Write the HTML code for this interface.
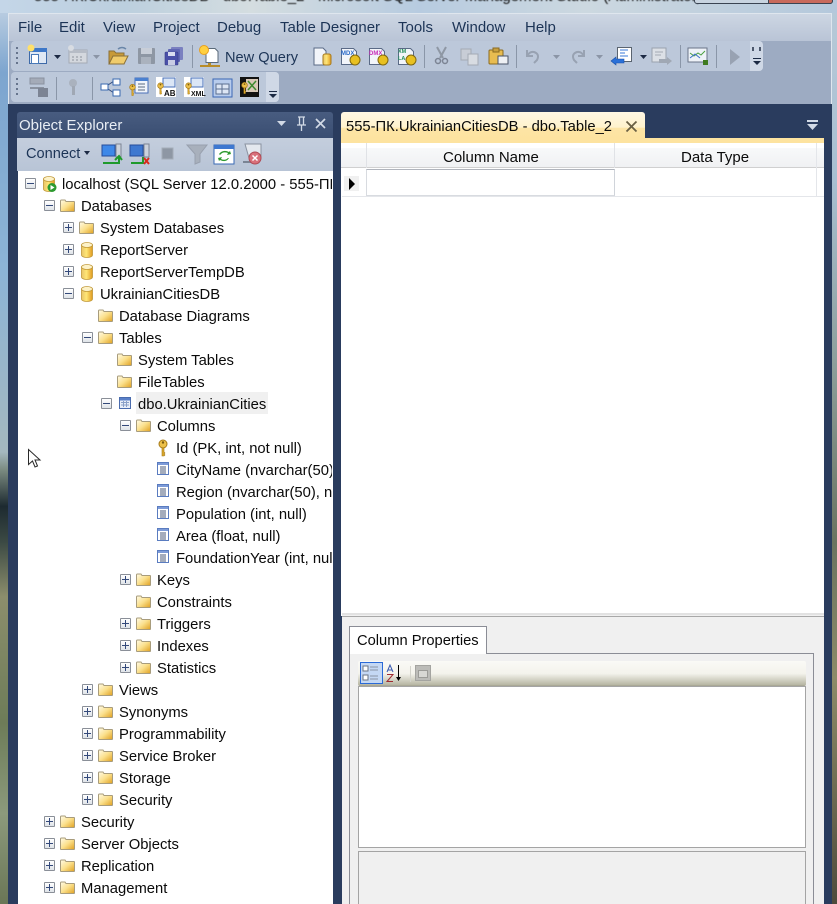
<!DOCTYPE html>
<html><head><meta charset="utf-8">
<style>
html,body{margin:0;padding:0}
body{width:837px;height:904px;overflow:hidden;position:relative;background:#6c7a80;font:15px/22px "Liberation Sans","Noto Sans CJK JP",sans-serif;color:#000}
div,svg,span{position:absolute}
.t{white-space:nowrap;height:22px;line-height:22px;margin-top:1px}
.m{color:#1c3456;top:16px}
.r{white-space:nowrap;height:22px;line-height:22px;color:#0a0a0a;margin-top:1px;font-size:14.8px}
.ex{width:9px;height:9px;border:1px solid #8a8f98;background:linear-gradient(#fff,#dfe3e8);border-radius:1px}
.ex:before{content:"";position:absolute;left:1px;top:4px;width:7px;height:1px;background:#33497a}
.ex.p:after{content:"";position:absolute;left:4px;top:1px;width:1px;height:7px;background:#33497a}
.a{width:0;height:0;border-left:3.5px solid transparent;border-right:3.5px solid transparent;border-top:4px solid #1c2a44}
svg text{font-family:"Liberation Sans",sans-serif;font-weight:bold}
</style></head><body>
<svg width="0" height="0" style="left:0;top:0"><defs>
<linearGradient id="fg" x1="0" y1="0" x2="1" y2="1"><stop offset="0" stop-color="#fffbe8"/><stop offset=".5" stop-color="#fbe08c"/><stop offset="1" stop-color="#e0a020"/></linearGradient>
<linearGradient id="db" x1="0" y1="0" x2="1" y2="0"><stop offset="0" stop-color="#e8c468"/><stop offset=".45" stop-color="#ffe676"/><stop offset="1" stop-color="#e09a20"/></linearGradient>
<symbol id="folder" viewBox="0 0 15 13"><path d="M.5 12V2q0-1 1-1h3.500l1 1.500H14q.5 0 .5.5v9q0 .5-.5.5H1q-.5 0-.5-.5z" fill="url(#fg)" stroke="#a89c7c"/></symbol>
<symbol id="dbi" viewBox="0 0 12 16"><path d="M.5 3v10c0 3.300 11 3.300 11 0V3z" fill="url(#db)" stroke="#c09838" stroke-width=".8"/><ellipse cx="6" cy="3" rx="5.500" ry="2.500" fill="#fdf2c8" stroke="#c09838" stroke-width=".8"/></symbol>
<symbol id="col" viewBox="0 0 12 13"><rect x=".5" y=".5" width="11" height="12" fill="#fff" stroke="#5a7cc0"/><rect x="1" y="1" width="10" height="2" fill="#7d9bd8"/><path d="M3 5h6M3 7h6M3 9h6M3 11h6" stroke="#4a5a78"/></symbol>
<symbol id="key" viewBox="0 0 10 18"><circle cx="5" cy="5" r="4" fill="#ecc04a" stroke="#a67a18"/><circle cx="5" cy="3.500" r="1.200" fill="#7a5a10"/><path d="M4 9v8l2 0 1-1-1-1 1-1-1-1V9z" fill="#dba92c" stroke="#a67a18" stroke-width=".6"/></symbol>
<symbol id="tbl" viewBox="0 0 12 12"><rect x=".5" y=".5" width="11" height="11" fill="#e8eef8" stroke="#4a6cae"/><rect x="1" y="1" width="10" height="2.500" fill="#5a80c8"/><path d="M2 5.500h8M2 8h8M4.500 4v6M7.500 4v6" stroke="#8aa0c8"/></symbol>
</defs></svg>

<!-- desktop -->
<div style="left:0;top:0;width:8px;height:904px;background:linear-gradient(#c4d4e4 0,#7da5cf 8%,#8cb4d6 30%,#a4b8bf 50%,#7a8a80 52%,#1d2a30 56%,#3c4a44 60%,#8c8e6c 66%,#6d7c58 80%,#8c9a7c 90%,#6a7656 100%)"></div>
<div style="left:832px;top:0;width:5px;height:904px;background:linear-gradient(#b8cad8 0,#a8bfd2 20%,#8d9f9c 40%,#6a7360 60%,#8d8b68 75%,#4e4b3c 100%)"></div>
<div style="left:0;top:0;width:837px;height:13px;background:linear-gradient(90deg,#c4d6e8,#bccfde 15%,#d4dde0 30%,#b7cbe0 50%,#ccd8e0 70%,#b4c8dc)"></div>
<div class="t" style="left:34px;top:-15px;color:#111;filter:blur(.4px)">555-ПК.UkrainianCitiesDB - dbo.Table_2 - Microsoft SQL Server Management Studio (Administrator)</div>
<div style="left:694px;top:-4px;width:137px;height:6px;background:#c8d4e0;border:1px solid #3a4452;border-radius:3px"></div>
<div style="left:768px;top:-4px;width:63px;height:6px;background:#c86a5c;border:1px solid #3a4452;border-radius:0 3px 3px 0"></div>

<!-- window -->
<div style="left:8px;top:13px;width:824px;height:891px;background:#9dabc2;box-shadow:0 0 0 1px #dfe6ee inset"></div>
<div style="left:9px;top:14px;width:822px;height:27px;background:linear-gradient(#cdd6e3,#b9c4d6)"></div>
<div class="t m" style="left:18px">File</div>
<div class="t m" style="left:59px">Edit</div>
<div class="t m" style="left:103px">View</div>
<div class="t m" style="left:153px">Project</div>
<div class="t m" style="left:217px">Debug</div>
<div class="t m" style="left:280px">Table Designer</div>
<div class="t m" style="left:398px">Tools</div>
<div class="t m" style="left:452px">Window</div>
<div class="t m" style="left:525px">Help</div>

<!-- toolbars -->
<div style="left:11px;top:41px;width:752px;height:30px;background:#bcc8da;border-radius:4px"></div>
<div style="left:750px;top:41px;width:13px;height:30px;background:#cfd8e6;border-radius:0 4px 4px 0"></div>
<div style="left:11px;top:72px;width:268px;height:30px;background:#bcc8da;border-radius:4px"></div>
<div style="left:266px;top:72px;width:13px;height:30px;background:#cfd8e6;border-radius:0 4px 4px 0"></div>
<svg style="left:0;top:36px" width="837" height="70" viewBox="0 36 837 70">
<g fill="#66748c"><rect x="16" y="47" width="2" height="2"/><rect x="16" y="52" width="2" height="2"/><rect x="16" y="57" width="2" height="2"/><rect x="16" y="62" width="2" height="2"/><rect x="16" y="78" width="2" height="2"/><rect x="16" y="83" width="2" height="2"/><rect x="16" y="88" width="2" height="2"/><rect x="16" y="93" width="2" height="2"/></g>
<!-- new project -->
<rect x="29.500" y="48.500" width="17" height="15" fill="#dfe8f4" stroke="#3e6aa8"/><rect x="29" y="48" width="18" height="4" fill="#3e78c8"/><rect x="31.500" y="54.500" width="7" height="9" fill="#fff" stroke="#4a7ab8"/><circle cx="31" cy="48" r="3.500" fill="#ffe06a"/>
<path d="M54 55h7l-3.500 4z" fill="#1c2a44"/>
<rect x="69" y="50" width="18" height="13" fill="#d4d8de" stroke="#a4aab4"/><rect x="69" y="50" width="18" height="3" fill="#b6bcc6"/><path d="M72 57h12M72 60h12" stroke="#8c929c" stroke-dasharray="2 2"/><circle cx="71" cy="48" r="3" fill="#d8dce2"/>
<path d="M93 55h7l-3.500 4z" fill="#8b95a6"/>
<!-- open -->
<path d="M109 64V51h5l2 2h8v11z" fill="#c89a38" stroke="#8a7038"/><path d="M109 64l4-8h15l-4 8z" fill="#f0cc6c" stroke="#8a7038"/><path d="M118 49q4-3 8 0" stroke="#6a86a8" fill="none" stroke-width="1.500"/>
<!-- save -->
<rect x="138" y="48" width="17" height="16" rx="1" fill="#8e97a4"/><rect x="141" y="48" width="11" height="6" fill="#c8ced8"/><rect x="141" y="57" width="10" height="7" fill="#aab2be"/>
<!-- save all -->
<rect x="171" y="47" width="12" height="13" rx="1" fill="#7a80c0"/><rect x="168" y="49" width="12" height="13" rx="1" fill="#5f66b4"/><rect x="165" y="52" width="13" height="13" rx="1" fill="#4a50a8" stroke="#383c88" stroke-width=".6"/><rect x="168" y="52" width="7" height="4" fill="#d8dcf0"/><rect x="168" y="60" width="7" height="5" fill="#c8cce4"/>
<rect x="192" y="45" width="1" height="23" fill="#8a96a8"/>
<!-- new query -->
<path d="M206 48.500h9l3 3v11h-12z" fill="#fff" stroke="#5a6a7a"/><circle cx="204" cy="50" r="4.500" fill="#ffd040" stroke="#e8a020"/><path d="M200 66h20" stroke="#b88c28" stroke-width="2"/><rect x="208" y="63" width="3" height="4" fill="#b88c28"/>
<!-- doc db -->
<path d="M314 48h9l3 3v14h-12z" fill="#f2f5fa" stroke="#5a6a86"/><rect x="323" y="54" width="8" height="11" rx="2" fill="url(#db)" stroke="#a77a1c"/>
<path d="M341.500 48.500h12l3 3v13h-15z" fill="#f2f5fa" stroke="#5a6a86"/><text x="341" y="55" font-size="6" fill="#2a6ac8">MDX</text><circle cx="355" cy="60" r="5" fill="#e8c020" stroke="#806810"/>
<path d="M369.500 48.500h12l3 3v13h-15z" fill="#f2f5fa" stroke="#5a6a86"/><text x="369" y="55" font-size="6" fill="#c830b8">DMX</text><circle cx="383" cy="60" r="5" fill="#e8c020" stroke="#806810"/>
<path d="M398.500 48.500h12l3 3v13h-15z" fill="#f2f5fa" stroke="#5a6a86"/><text x="398" y="53" font-size="5.500" fill="#2a9060">XM</text><text x="398" y="60" font-size="5.500" fill="#2a9060">LA</text><circle cx="411" cy="60" r="5" fill="#e8c020" stroke="#806810"/>
<rect x="424" y="45" width="1" height="23" fill="#8a96a8"/>
<!-- cut -->
<path d="M437 47l6 11M446 47l-6 11" stroke="#8e97a4" stroke-width="2"/><circle cx="438" cy="61" r="2.500" fill="none" stroke="#7c8494" stroke-width="1.500"/><circle cx="445" cy="61" r="2.500" fill="none" stroke="#7c8494" stroke-width="1.500"/>
<!-- copy -->
<rect x="461" y="49" width="10" height="11" fill="#c8cdd6" stroke="#a4aab4"/><rect x="468" y="54" width="10" height="11" fill="#d8dce2" stroke="#a4aab4"/>
<!-- paste -->
<rect x="489" y="50" width="14" height="14" rx="1" fill="#e8bc50" stroke="#8a6a20"/><rect x="493" y="48" width="6" height="4" fill="#c8a040" stroke="#8a6a20"/><rect x="498" y="56" width="10" height="8" fill="#eef0f4" stroke="#4a5468"/>
<rect x="516" y="45" width="1" height="23" fill="#8a96a8"/>
<path d="M527 50v6h6M527 56q3-5 7-4 6 2 3 8l-3 3" fill="none" stroke="#98a2b2" stroke-width="2"/>
<path d="M553 55h7l-3.500 4z" fill="#8b95a6"/>
<path d="M584 50v6h-6M584 56q-3-5-7-4-6 2-3 8l3 3" fill="none" stroke="#98a2b2" stroke-width="2"/>
<path d="M596 55h7l-3.500 4z" fill="#8b95a6"/>
<!-- results -->
<rect x="617.500" y="47.500" width="14" height="14" fill="#fff" stroke="#5a6470"/><path d="M620 50h8M620 53h5M620 56h8" stroke="#3a7ad8"/><path d="M611 61l5-4v2h8v4h-8v2z" fill="#2a70d8" stroke="#1a50a8" stroke-width=".6"/>
<path d="M640 55h7l-3.500 4z" fill="#1c2a44"/>
<rect x="652" y="48" width="14" height="14" fill="#dce0e6" stroke="#9aa2ae"/><path d="M655 52h8M655 55h6" stroke="#a4aab4"/><path d="M672 61l-5-4v2h-8v4h8v2z" fill="#a0a8b4"/>
<rect x="680" y="45" width="1" height="23" fill="#8a96a8"/>
<!-- chart -->
<rect x="688" y="48" width="19" height="14" fill="#eef2f8" stroke="#6a7488"/><path d="M690 53l4 3 4-3 3 2 4-4" stroke="#4aa040" fill="none"/><path d="M690 58l5-4 5 4" stroke="#3a70c8" fill="none"/><rect x="703" y="60" width="5" height="5" fill="#3e7a20"/>
<rect x="716" y="45" width="1" height="23" fill="#8a96a8"/>
<path d="M730 49l10 8-10 8z" fill="#98a2b2"/>
<path d="M753 47v4M760 47v4" stroke="#222d44" stroke-width="1.500"/><rect x="753" y="58" width="8" height="1" fill="#1c2a44"/><path d="M753 61h8l-4 4z" fill="#1c2a44"/>
<!-- toolbar 2 -->
<rect x="30" y="78" width="14" height="6" fill="#a4abb8" stroke="#8a92a0"/><path d="M30 88h14" stroke="#8a92a0" stroke-width="2"/><rect x="38" y="88" width="10" height="9" fill="#7c8494"/>
<rect x="56" y="77" width="1" height="23" fill="#8a96a8"/>
<circle cx="73" cy="83" r="4" fill="#aab2be"/><rect x="72" y="86" width="3" height="9" fill="#a0a8b4"/>
<rect x="92" y="77" width="1" height="23" fill="#8a96a8"/>
<!-- relationship -->
<path d="M105 87l9-6M105 87l9 6" stroke="#334c7c"/><rect x="101" y="84" width="7" height="6" fill="#fff" stroke="#3a6ab0"/><rect x="113" y="79" width="7" height="6" fill="#fff" stroke="#3a6ab0"/><rect x="113" y="90" width="7" height="6" fill="#fff" stroke="#3a6ab0"/>
<!-- key table -->
<rect x="135" y="78" width="13" height="15" fill="#f0f4fa" stroke="#4a70b8"/><rect x="135" y="78" width="13" height="3" fill="#4a80d0"/><path d="M138 84h7M138 87h7M138 90h7" stroke="#5a6a80"/><use href="#key" x="129" y="83" width="7" height="14"/>
<rect x="156" y="77" width="20" height="20" fill="#fff"/><rect x="163" y="78" width="12" height="9" fill="#dbe6f6" stroke="#4a70b8"/><use href="#key" x="157" y="82" width="7" height="13"/><text x="164" y="96" font-size="8" fill="#111">AB</text>
<rect x="184" y="77" width="20" height="20" fill="#fff"/><rect x="191" y="78" width="12" height="9" fill="#dbe6f6" stroke="#4a70b8"/><use href="#key" x="185" y="82" width="7" height="13"/><text x="191" y="96" font-size="7" fill="#111">XML</text>
<rect x="213" y="79" width="19" height="18" fill="#b8ccec" stroke="#3a66b4"/><rect x="216" y="84" width="13" height="10" fill="#dde6f4" stroke="#5c6f90"/><path d="M216 89h13M222 84v10" stroke="#5c6f90"/>
<rect x="240" y="77" width="19" height="20" fill="#111"/><rect x="246" y="79" width="12" height="13" fill="#d8c8b8"/><path d="M248 90l8-9M248 81l8 9" stroke="#3e8a30" stroke-width="1.500"/><use href="#key" x="241" y="81" width="7" height="14"/>
<rect x="269" y="91" width="8" height="1" fill="#1c2a44"/><path d="M269 94h8l-4 4z" fill="#1c2a44"/>
</svg>
<div class="t" style="left:225px;top:46px;color:#1c3456;font-size:14.6px">New Query</div>

<!-- dark bg -->
<div style="left:8px;top:104px;width:824px;height:800px;background:#2a3c5e"></div>

<!-- Object explorer -->
<div style="left:17px;top:112px;width:316px;height:26px;background:linear-gradient(#485c80,#3a4e72);border-radius:3px 3px 0 0"></div>
<div class="t" style="left:19px;top:114px;color:#e8edf4">Object Explorer</div>
<svg style="left:270px;top:112px" width="63" height="26">
<path d="M7 9h9l-4.500 5z" fill="#d2dae6"/>
<path d="M28 5h7M29.500 5v8M33.500 5v8M27 13h9M31.500 13v6" stroke="#d2dae6" stroke-width="1.300" fill="none"/>
<path d="M46 7l9 9M55 7l-9 9" stroke="#d2dae6" stroke-width="1.700"/>
</svg>
<div style="left:17px;top:138px;width:316px;height:33px;background:linear-gradient(#c4cedd,#b8c4d6)"></div>
<div class="t" style="left:26px;top:142px;color:#1c3456;font-size:14.6px">Connect</div>
<div class="a" style="left:84px;top:151px"></div>
<svg style="left:100px;top:142px" width="170" height="28">
<rect x="2" y="3" width="13" height="11" fill="#3e88e8" stroke="#254c9a"/><rect x="16" y="2" width="5" height="13" fill="#ccd2dc" stroke="#7c8494"/><path d="M3 21h16v-6M15 18l4-4 3 4" stroke="#1f9a2c" stroke-width="2" fill="none"/>
<rect x="30" y="3" width="13" height="11" fill="#3e78d0" stroke="#254c9a"/><rect x="44" y="2" width="5" height="13" fill="#ccd2dc" stroke="#7c8494"/><path d="M31 21h12v-6" stroke="#1f9a2c" stroke-width="2" fill="none"/><path d="M44 16l5 6M49 16l-5 6" stroke="#d82a1c" stroke-width="2"/>
<rect x="62" y="6" width="11" height="11" fill="#8e97a4" stroke="#a4acb8"/>
<path d="M87 3h20l-7 9v8l-5 2V12z" fill="#a8b0bc" stroke="#98a0ae"/>
<rect x="114" y="3" width="20" height="19" fill="#fff" stroke="#3a6ab4"/><rect x="114" y="3" width="20" height="4" fill="#3e78d0"/><path d="M120 13q3-4 8-2l-1 2 4-1-1-3-1 1q-6-3-10 2zM128 16q-3 3-7 1l1-2-4 1 1 3 1-1q6 3 9-2z" fill="#2e9a30"/>
<path d="M145 2h16v14h-12z" fill="#e4e8ee" stroke="#8a92a0"/><path d="M143 20h14" stroke="#7a8494" stroke-width="2"/><circle cx="155" cy="16" r="6" fill="#d8707a" stroke="#b04a54"/><path d="M152.500 13.500l5 5M157.500 13.500l-5 5" stroke="#fff" stroke-width="1.500"/>
</svg>

<div id="tree" style="left:18px;top:171px;width:315px;height:733px;background:#fff;overflow:hidden">
<div style="left:118px;top:221px;width:132px;height:22px;background:#f0f0f0"></div>
</div>

<div style="left:0;top:0;width:332px;height:904px;overflow:hidden">
<!-- level 0 server -->
<div class="ex" style="left:25px;top:178px"></div>
<svg style="left:43px;top:176px" width="15" height="17"><use href="#dbi" width="12" height="16"/><circle cx="9" cy="11.500" r="4.500" fill="#2c9a30"/><path d="M7.500 9l4 2.500-4 2.500z" fill="#fff"/></svg>
<div class="r" style="left:62px;top:173px">localhost (SQL Server 12.0.2000 - 555-ПК\Admin)</div>

<div class="ex" style="left:44px;top:200px"></div><svg style="left:60px;top:199px" width="15" height="13"><use href="#folder"/></svg><div class="r" style="left:81px;top:195px">Databases</div>

<div class="ex p" style="left:63px;top:222px"></div><svg style="left:79px;top:221px" width="15" height="13"><use href="#folder"/></svg><div class="r" style="left:100px;top:217px">System Databases</div>
<div class="ex p" style="left:63px;top:244px"></div><svg style="left:81px;top:242px" width="12" height="16"><use href="#dbi"/></svg><div class="r" style="left:100px;top:239px">ReportServer</div>
<div class="ex p" style="left:63px;top:266px"></div><svg style="left:81px;top:264px" width="12" height="16"><use href="#dbi"/></svg><div class="r" style="left:100px;top:261px">ReportServerTempDB</div>
<div class="ex" style="left:63px;top:288px"></div><svg style="left:81px;top:286px" width="12" height="16"><use href="#dbi"/></svg><div class="r" style="left:100px;top:283px">UkrainianCitiesDB</div>

<svg style="left:98px;top:309px" width="15" height="13"><use href="#folder"/></svg><div class="r" style="left:119px;top:305px">Database Diagrams</div>
<div class="ex" style="left:82px;top:332px"></div><svg style="left:98px;top:331px" width="15" height="13"><use href="#folder"/></svg><div class="r" style="left:119px;top:327px">Tables</div>

<svg style="left:117px;top:353px" width="15" height="13"><use href="#folder"/></svg><div class="r" style="left:138px;top:349px">System Tables</div>
<svg style="left:117px;top:375px" width="15" height="13"><use href="#folder"/></svg><div class="r" style="left:138px;top:371px">FileTables</div>
<div class="ex" style="left:101px;top:398px"></div><svg style="left:119px;top:397px" width="12" height="12"><use href="#tbl"/></svg><div class="r" style="left:138px;top:393px">dbo.UkrainianCities</div>

<div class="ex" style="left:120px;top:420px"></div><svg style="left:136px;top:419px" width="15" height="13"><use href="#folder"/></svg><div class="r" style="left:157px;top:415px">Columns</div>

<svg style="left:158px;top:439px" width="10" height="18"><use href="#key"/></svg><div class="r" style="left:176px;top:437px">Id (PK, int, not null)</div>
<svg style="left:157px;top:462px" width="12" height="13"><use href="#col"/></svg><div class="r" style="left:176px;top:459px">CityName (nvarchar(50), not null)</div>
<svg style="left:157px;top:484px" width="12" height="13"><use href="#col"/></svg><div class="r" style="left:176px;top:481px">Region (nvarchar(50), not null)</div>
<svg style="left:157px;top:506px" width="12" height="13"><use href="#col"/></svg><div class="r" style="left:176px;top:503px">Population (int, null)</div>
<svg style="left:157px;top:528px" width="12" height="13"><use href="#col"/></svg><div class="r" style="left:176px;top:525px">Area (float, null)</div>
<svg style="left:157px;top:550px" width="12" height="13"><use href="#col"/></svg><div class="r" style="left:176px;top:547px">FoundationYear (int, null)</div>

<div class="ex p" style="left:120px;top:574px"></div><svg style="left:136px;top:573px" width="15" height="13"><use href="#folder"/></svg><div class="r" style="left:157px;top:569px">Keys</div>
<svg style="left:136px;top:595px" width="15" height="13"><use href="#folder"/></svg><div class="r" style="left:157px;top:591px">Constraints</div>
<div class="ex p" style="left:120px;top:618px"></div><svg style="left:136px;top:617px" width="15" height="13"><use href="#folder"/></svg><div class="r" style="left:157px;top:613px">Triggers</div>
<div class="ex p" style="left:120px;top:640px"></div><svg style="left:136px;top:639px" width="15" height="13"><use href="#folder"/></svg><div class="r" style="left:157px;top:635px">Indexes</div>
<div class="ex p" style="left:120px;top:662px"></div><svg style="left:136px;top:661px" width="15" height="13"><use href="#folder"/></svg><div class="r" style="left:157px;top:657px">Statistics</div>

<div class="ex p" style="left:82px;top:684px"></div><svg style="left:98px;top:683px" width="15" height="13"><use href="#folder"/></svg><div class="r" style="left:119px;top:679px">Views</div>
<div class="ex p" style="left:82px;top:706px"></div><svg style="left:98px;top:705px" width="15" height="13"><use href="#folder"/></svg><div class="r" style="left:119px;top:701px">Synonyms</div>
<div class="ex p" style="left:82px;top:728px"></div><svg style="left:98px;top:727px" width="15" height="13"><use href="#folder"/></svg><div class="r" style="left:119px;top:723px">Programmability</div>
<div class="ex p" style="left:82px;top:750px"></div><svg style="left:98px;top:749px" width="15" height="13"><use href="#folder"/></svg><div class="r" style="left:119px;top:745px">Service Broker</div>
<div class="ex p" style="left:82px;top:772px"></div><svg style="left:98px;top:771px" width="15" height="13"><use href="#folder"/></svg><div class="r" style="left:119px;top:767px">Storage</div>
<div class="ex p" style="left:82px;top:794px"></div><svg style="left:98px;top:793px" width="15" height="13"><use href="#folder"/></svg><div class="r" style="left:119px;top:789px">Security</div>

<div class="ex p" style="left:44px;top:816px"></div><svg style="left:60px;top:815px" width="15" height="13"><use href="#folder"/></svg><div class="r" style="left:81px;top:811px">Security</div>
<div class="ex p" style="left:44px;top:838px"></div><svg style="left:60px;top:837px" width="15" height="13"><use href="#folder"/></svg><div class="r" style="left:81px;top:833px">Server Objects</div>
<div class="ex p" style="left:44px;top:860px"></div><svg style="left:60px;top:859px" width="15" height="13"><use href="#folder"/></svg><div class="r" style="left:81px;top:855px">Replication</div>
<div class="ex p" style="left:44px;top:882px"></div><svg style="left:60px;top:881px" width="15" height="13"><use href="#folder"/></svg><div class="r" style="left:81px;top:877px">Management</div>

<!-- cursor -->
<svg style="left:27px;top:448px" width="15" height="22"><path d="M1.500 1.500v15l4-3.500 2.500 6 2.500-1-2.500-6h5z" fill="#fff" stroke="#2a2a2a"/></svg>
</div>

<!-- tab -->
<div style="left:341px;top:112px;width:304px;height:26px;background:linear-gradient(#fff8e4 0,#fff2cc 60%,#fde5a6 61%,#fde3a0 100%);border-radius:3px 3px 0 0"></div>
<div class="t" style="left:346px;top:115px;color:#0a0a0a;font-size:14.75px">555-ПК.UkrainianCitiesDB - dbo.Table_2</div>
<svg style="left:625px;top:120px" width="13" height="13"><path d="M1.500 1.500l10 10M11.500 1.500l-10 10" stroke="#6a6044" stroke-width="1.800"/></svg>
<svg style="left:806px;top:119px" width="13" height="12"><rect x="1" y="1" width="11" height="2" fill="#d2dae6"/><path d="M1 5h11l-5.500 6z" fill="#d2dae6"/></svg>
<div style="left:341px;top:138px;width:483px;height:5px;background:#fde3a0"></div>

<!-- designer -->
<div style="left:341px;top:143px;width:483px;height:473px;background:#fff"></div>
<div style="left:341px;top:148px;width:483px;height:19px;background:linear-gradient(#f8f9fa,#f0f1f3)"></div>
<div style="left:341px;top:167px;width:483px;height:1px;background:#d0d0d0"></div>
<div style="left:366px;top:143px;width:1px;height:25px;background:#e0e2e6"></div>
<div style="left:614px;top:143px;width:1px;height:25px;background:#e0e2e6"></div>
<div style="left:816px;top:143px;width:1px;height:53px;background:#e4e6ea"></div>
<div class="t" style="left:443px;top:146px;color:#0a0a0a">Column Name</div>
<div class="t" style="left:681px;top:146px;color:#0a0a0a">Data Type</div>
<div style="left:344px;top:176px;width:15px;height:15px;background:#f0f0f0"></div>
<svg style="left:349px;top:178px" width="7" height="12"><path d="M0 0l6 6-6 6z" fill="#000"/></svg>
<div style="left:366px;top:169px;width:249px;height:27px;border:1px solid #b0b4bc;border-left-color:#d8dbe0;border-bottom-color:#d8dbe0;border-right-color:#d0d4da;box-sizing:border-box"></div>
<div style="left:342px;top:196px;width:482px;height:1px;background:#e4e6ea"></div>

<!-- lower -->
<div style="left:342px;top:613px;width:482px;height:291px;background:#f0f0f0"></div>
<div style="left:342px;top:613px;width:482px;height:2px;background:#e2e2e2"></div>
<div style="left:342px;top:616px;width:482px;height:1px;background:#a8a8a8"></div>
<div style="left:349px;top:653px;width:465px;height:251px;border:1px solid #8b8d96;border-bottom:0;box-sizing:border-box"></div>
<div style="left:349px;top:626px;width:138px;height:28px;background:#fff;border:1px solid #8b8d96;border-bottom:0;box-sizing:border-box"></div>
<div style="left:350px;top:654px;width:463px;height:250px;background:#f0f0f0"></div>
<div class="t" style="left:357px;top:629px;color:#0a0a0a;font-size:14.7px">Column Properties</div>
<div style="left:358px;top:661px;width:448px;height:25px;background:linear-gradient(#fafaf6 0,#f4f3ec 50%,#b8b7a4 95%,#a09f8c 100%);border-radius:2px"></div>
<svg style="left:358px;top:661px" width="80" height="25">
<rect x="2.500" y="1.500" width="22" height="21" fill="#c4d8f4" stroke="#2a6ad8"/>
<rect x="5" y="5" width="5" height="5" fill="#fff" stroke="#6a7484"/><rect x="5" y="14" width="5" height="5" fill="#fff" stroke="#6a7484"/><path d="M12 6h8M12 9h8M12 15h8M12 18h8" stroke="#8a94a4"/>
<path d="M29 11l3-7 3 7M30 9h4" stroke="#3a5ab0" fill="none"/><path d="M29 13.500h6l-6 7h6" stroke="#a02a30" fill="none"/><path d="M40.500 4v14" stroke="#000"/><path d="M38 16h5l-2.500 4z" fill="#000"/>
<rect x="52" y="5" width="1" height="16" fill="#d4d4cc"/>
<rect x="57.500" y="4.500" width="15" height="15" fill="#bcbcb8" stroke="#a4a4a0"/><rect x="60.500" y="9.500" width="9" height="7" fill="#d8d8d4" stroke="#9c9c98"/>
</svg>
<div style="left:358px;top:686px;width:448px;height:162px;background:#fff;border:1px solid #a4a4a4;box-sizing:border-box"></div>
<div style="left:358px;top:851px;width:448px;height:53px;background:#f0f0f0;border:1px solid #a4a4a4;border-bottom:0;box-sizing:border-box"></div>
</body></html>
